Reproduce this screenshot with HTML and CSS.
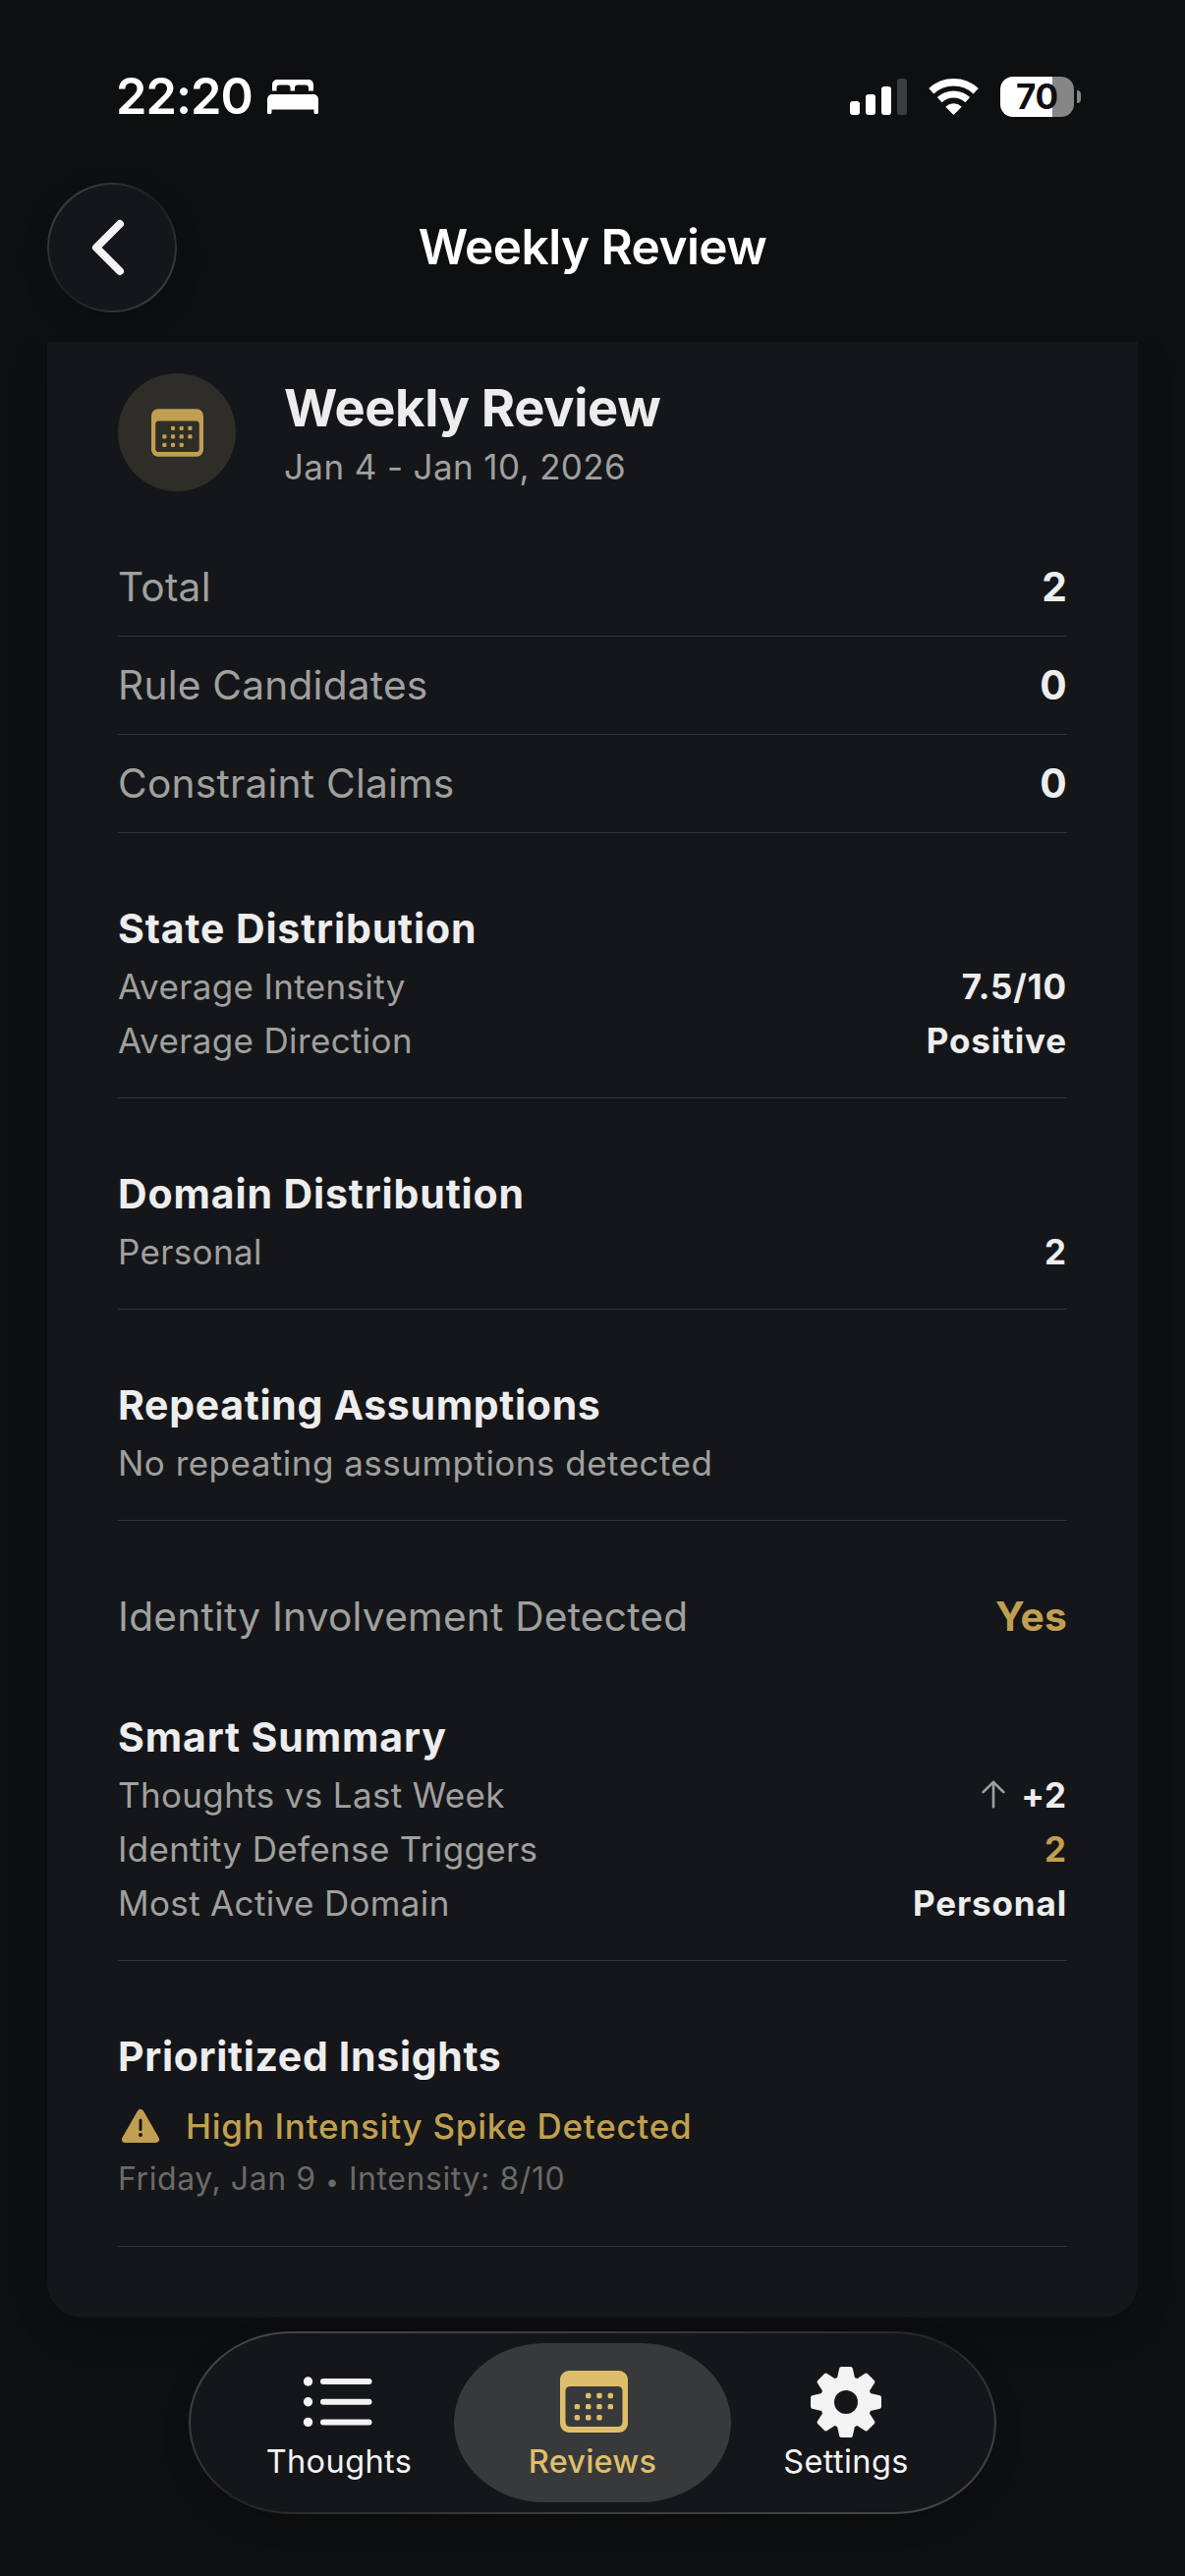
FILE: index.html
```
<!DOCTYPE html>
<html lang="en">
<head>
    <meta charset="UTF-8">
    <meta name="viewport" content="width=device-width, initial-scale=1.0">
    <title>Weekly Review</title>
    <link rel="stylesheet" href="styles.css">
</head>
<body>
<!-- shared calendar icon -->
<svg class="icon-defs" width="0" height="0">
    <symbol id="icon-calendar" viewBox="0 0 69 63">
        <path fill="currentColor" fill-rule="evenodd" d="M9 0H60A9 9 0 0 1 69 9V54A9 9 0 0 1 60 63H9A9 9 0 0 1 0 54V9A9 9 0 0 1 9 0ZM10 16A4.5 4.5 0 0 0 5.5 20.5V52.5A4.5 4.5 0 0 0 10 57H59A4.5 4.5 0 0 0 63.5 52.5V20.5A4.5 4.5 0 0 0 59 16Z"/>
        <g fill="currentColor">
            <rect x="26" y="22.8" width="5.4" height="5.4" rx="1.6"/>
            <rect x="37.3" y="22.8" width="5.4" height="5.4" rx="1.6"/>
            <rect x="48.6" y="22.8" width="5.4" height="5.4" rx="1.6"/>
            <rect x="14.7" y="33.9" width="5.4" height="5.4" rx="1.6"/>
            <rect x="26" y="33.9" width="5.4" height="5.4" rx="1.6"/>
            <rect x="37.3" y="33.9" width="5.4" height="5.4" rx="1.6"/>
            <rect x="48.6" y="33.9" width="5.4" height="5.4" rx="1.6"/>
            <rect x="14.7" y="45" width="5.4" height="5.4" rx="1.6"/>
            <rect x="26" y="45" width="5.4" height="5.4" rx="1.6"/>
            <rect x="37.3" y="45" width="5.4" height="5.4" rx="1.6"/>
        </g>
    </symbol>
</svg>

<!-- status bar -->
<div class="status-bar">
    <div class="status-left">
        <span class="time">22:20</span>
        <svg class="bed" viewBox="0 0 52 35" width="52" height="35" fill="#fff">
            <path d="M5 11.5V5a5 5 0 0 1 5-5h32a5 5 0 0 1 5 5v6.5h-5v-3a3 3 0 0 0-3-3h-8a3 3 0 0 0-3 3v3h-4.500v-3a3 3 0 0 0-3-3h-8a3 3 0 0 0-3 3v3z"/>
            <path d="M0 20a5 5 0 0 1 5-5h42a5 5 0 0 1 5 5v13.5a1.5 1.5 0 0 1-1.5 1.5h-1.5a1.5 1.5 0 0 1-1.5-1.5V30.5H4.500v3A1.5 1.5 0 0 1 3 35H1.5A1.5 1.5 0 0 1 0 33.5z"/>
        </svg>
    </div>
    <div class="status-right">
        <svg class="signal" viewBox="0 0 58 37" width="58" height="37" fill="#fff">
            <rect x="0" y="23" width="10" height="14" rx="3"/>
            <rect x="16" y="16" width="10" height="21" rx="3"/>
            <rect x="32" y="8" width="10" height="29" rx="3"/>
            <rect x="48" y="0" width="10" height="37" rx="3" fill="#3b3c3d"/>
        </svg>
        <svg class="wifi" viewBox="0 0 51 37" width="51" height="37" fill="none" stroke="#fff">
            <path d="M2.8 12.7A33.2 33.2 0 0 1 48.2 12.7" stroke-width="7.5"/>
            <path d="M11.2 21.6A21 21 0 0 1 39.8 21.6" stroke-width="7"/>
            <path d="M25.5 36L18.3 28.8A10.5 10.5 0 0 1 32.7 28.8Z" fill="#fff" stroke-width="1.5" stroke-linejoin="round"/>
        </svg>
        <div class="battery">
            <div class="battery-body">70</div>
            <div class="battery-cap"></div>
        </div>
    </div>
</div>

<!-- navigation -->
<div class="nav">
    <div class="back">
        <svg viewBox="0 0 34 58" width="34" height="58" fill="none" stroke="#f3f3f3" stroke-width="8" stroke-linecap="round" stroke-linejoin="round">
            <path d="M29 5L5 29L29 53"/>
        </svg>
    </div>
    <div class="nav-title">Weekly Review</div>
</div>

<div class="scroll">
    <div class="card">
        <div class="card-header">
            <div class="badge"><svg width="53" height="49"><use href="#icon-calendar"/></svg></div>
            <div class="card-heading">
                <h1>Weekly Review</h1>
                <p class="dates">Jan 4 - Jan 10, 2026</p>
            </div>
        </div>

        <div class="stat"><span>Total</span><b>2</b></div>
        <div class="stat"><span>Rule Candidates</span><b>0</b></div>
        <div class="stat"><span>Constraint Claims</span><b>0</b></div>

        <div class="section">
            <h2>State Distribution</h2>
            <div class="row"><span>Average Intensity</span><b>7.5/10</b></div>
            <div class="row"><span>Average Direction</span><b>Positive</b></div>
        </div>

        <div class="section">
            <h2>Domain Distribution</h2>
            <div class="row"><span>Personal</span><b>2</b></div>
        </div>

        <div class="section">
            <h2 class="tight">Repeating Assumptions</h2>
            <div class="row"><span class="note">No repeating assumptions detected</span></div>
        </div>

        <div class="identity"><span>Identity Involvement Detected</span><b class="gold">Yes</b></div>

        <div class="section">
            <h2>Smart Summary</h2>
            <div class="row">
                <span>Thoughts vs Last Week</span>
                <div class="trend">
                    <svg viewBox="0 0 24 29" width="24" height="29" fill="none" stroke="#a0a09e" stroke-width="2.6" stroke-linecap="round" stroke-linejoin="round">
                        <path d="M12 27.3V1.8M1.6 12.2L12 1.8L22.4 12.2"/>
                    </svg>
                    <b>+2</b>
                </div>
            </div>
            <div class="row"><span>Identity Defense Triggers</span><b class="gold">2</b></div>
            <div class="row"><span>Most Active Domain</span><b>Personal</b></div>
        </div>

        <div class="section insights">
            <h2 class="tight">Prioritized Insights</h2>
            <div class="insight">
                <svg viewBox="0 0 38 34" width="38" height="34">
                    <path d="M19 3.5L34.5 30.5H3.5Z" fill="#c0a050" stroke="#c0a050" stroke-width="7" stroke-linejoin="round"/>
                    <path d="M19 11V20.5" stroke="#15161a" stroke-width="3" stroke-linecap="round"/>
                    <circle cx="19" cy="26" r="2" fill="#15161a"/>
                </svg>
                <span>High Intensity Spike Detected</span>
            </div>
            <p class="meta">Friday, Jan 9 <span class="dot">•</span> Intensity: 8/10</p>
        </div>
    </div>
</div>

<!-- tab bar -->
<div class="tab-bar">
    <div class="tab">
        <svg viewBox="0 0 72 72" width="72" height="72" fill="#f3f3f3">
            <circle cx="4.5" cy="15" r="4.7"/>
            <circle cx="4.5" cy="35.7" r="4.7"/>
            <circle cx="4.5" cy="56.4" r="4.7"/>
            <rect x="17" y="12" width="52.5" height="6" rx="3"/>
            <rect x="17" y="32.7" width="52.5" height="6" rx="3"/>
            <rect x="17" y="53.4" width="52.5" height="6" rx="3"/>
        </svg>
        <span>Thoughts</span>
    </div>
    <div class="tab active">
        <svg viewBox="0 0 72 72" width="72" height="72"><use href="#icon-calendar" x="3" y="4" width="69" height="63"/></svg>
        <span>Reviews</span>
    </div>
    <div class="tab">
        <svg viewBox="-36 -36 72 72" width="72" height="72" fill="#f3f3f3" stroke="#f3f3f3" stroke-width="4" stroke-linejoin="round">
            <circle r="24.5"/>
            <path id="tooth" d="M-7.5 -22L-4.8 -34H4.8L7.5 -22Z"/>
            <use href="#tooth" transform="rotate(45)"/>
            <use href="#tooth" transform="rotate(90)"/>
            <use href="#tooth" transform="rotate(135)"/>
            <use href="#tooth" transform="rotate(180)"/>
            <use href="#tooth" transform="rotate(225)"/>
            <use href="#tooth" transform="rotate(270)"/>
            <use href="#tooth" transform="rotate(315)"/>
            <circle r="12" fill="#15161a" stroke="none"/>
        </svg>
        <span>Settings</span>
    </div>
</div>
</body>
</html>
```
FILE: styles.css
```
* {
    margin: 0;
    padding: 0;
    box-sizing: border-box;
}

body {
    font-family: Inter, "Liberation Sans", sans-serif;
    background-color: #0e0f11;
    color: #ededed;
    width: 1206px;
    height: 2622px;
    overflow: hidden;
}

svg {
    display: block;
    flex: none;
    overflow: visible;
}

.icon-defs {
    display: none;
}

/* status bar */
.status-bar {
    height: 186px;
    padding: 72px 106px 62px 118px;
    display: flex;
    justify-content: space-between;
    align-items: center;
    color: #fff;
}

.status-left,
.status-right {
    display: flex;
    align-items: center;
}

.time {
    font-size: 50.5px;
    line-height: 52px;
    font-weight: 600;
    letter-spacing: -1px;
}

.bed {
    margin-left: 15px;
}

.wifi {
    margin-left: 22px;
}

.battery {
    display: flex;
    align-items: center;
    margin-left: 22px;
}

.battery-body {
    width: 75px;
    height: 41px;
    border-radius: 13px;
    background: linear-gradient(to right, #fff 53px, #868686 53px);
    color: #0e0f11;
    font-size: 35px;
    line-height: 41px;
    font-weight: 700;
    letter-spacing: -0.3px;
    text-align: center;
}

.battery-cap {
    width: 4px;
    height: 13px;
    margin-left: 3px;
    border-radius: 0 4px 4px 0;
    background-color: #868686;
}

/* navigation */
.nav {
    height: 162px;
    padding: 0 48px;
    display: grid;
    grid-template-columns: 132px 1fr 132px;
    align-items: start;
}

.back {
    width: 132px;
    height: 132px;
    padding-left: 43px;
    display: flex;
    align-items: center;
    border: 2px solid transparent;
    border-radius: 50%;
    background:
        linear-gradient(#15161a, #15161a) padding-box,
        linear-gradient(135deg, #484848, #1c1c1c 50%, #484848) border-box;
    box-shadow: 0 10px 30px rgba(0, 0, 0, 0.12);
}

.nav-title {
    font-size: 49.5px;
    line-height: 130px;
    font-weight: 600;
    letter-spacing: -0.55px;
    text-align: center;
    color: #fff;
}

/* card, its top is cut off by the navigation */
.scroll {
    padding: 0 48px;
    clip-path: inset(0 0 -80px 0);
}

.card {
    height: 2011px;
    padding: 32px 72px 0;
    background-color: #15161a;
    border-radius: 0 0 36px 36px;
    box-shadow: 0 12px 36px rgba(0, 0, 0, 0.15);
}

.card-header {
    display: flex;
    height: 120px;
    margin-bottom: 48px;
}

.badge {
    width: 120px;
    height: 120px;
    border-radius: 50%;
    background-color: #2f2d27;
    color: #c0a050;
    display: flex;
    justify-content: center;
    align-items: center;
}

.card-heading {
    margin-left: 49px;
    padding-top: 5px;
}

h1 {
    font-size: 52.4px;
    line-height: 60px;
    font-weight: 700;
    letter-spacing: -0.35px;
}

.dates {
    font-size: 35px;
    line-height: 61px;
    letter-spacing: 0.38px;
    color: #a0a09e;
}

.stat,
.identity {
    display: flex;
    justify-content: space-between;
    align-items: center;
    font-size: 40.7px;
    letter-spacing: 0.2px;
    color: #a0a09e;
}

.stat {
    height: 100px;
    border-bottom: 1px solid #34353a;
}

.identity {
    height: 123px;
    padding-top: 71px;
}

b {
    font-weight: 700;
    color: #ededed;
}

/* sections */
.section {
    padding: 66px 0 31px;
    border-bottom: 1px solid #34353a;
}

h2 {
    font-size: 41px;
    line-height: 62px;
    font-weight: 700;
    letter-spacing: 0.88px;
}

h2.tight {
    letter-spacing: 0.68px;
}

.row {
    height: 55px;
    display: flex;
    justify-content: space-between;
    align-items: center;
    font-size: 35px;
    letter-spacing: 0.35px;
    color: #a0a09e;
}

.row .note {
    letter-spacing: 0.48px;
}

.row b {
    letter-spacing: 0.85px;
}

b.gold {
    color: #c0a050;
}

.trend {
    display: flex;
    align-items: center;
    gap: 16px;
}

.insights {
    padding-bottom: 41px;
}

.insight {
    height: 66px;
    padding: 14px 0 0 4px;
    display: flex;
    align-items: center;
    gap: 27px;
    font-size: 35px;
    font-weight: 500;
    letter-spacing: 0.73px;
    color: #c0a050;
}

.meta {
    font-size: 32px;
    line-height: 55px;
    letter-spacing: 0.58px;
    color: #6b6a66;
}

.dot {
    font-size: 24px;
    line-height: 1;
}

/* tab bar */
.tab-bar {
    position: relative;
    width: 822px;
    height: 186px;
    margin: 14px auto 0 192px;
    padding: 10px;
    display: flex;
    border: 2px solid transparent;
    border-radius: 104px / 93px;
    background:
        linear-gradient(#15161a, #15161a) padding-box,
        linear-gradient(to bottom right, #484848, #3a3936 30%, #242422 50%, #3a3936 70%, #484848) border-box;
    box-shadow: 0 10px 30px rgba(0, 0, 0, 0.12);
}

.tab {
    width: 282px;
    height: 162px;
    padding-top: 24px;
    flex: none;
    display: flex;
    flex-direction: column;
    align-items: center;
    border-radius: 92px / 81px;
    font-size: 32.5px;
    line-height: 50px;
    font-weight: 400;
    letter-spacing: 0.4px;
    color: #f3f3f3;
}

.tab + .tab {
    margin-left: -24px;
}

.tab.active {
    background-color: #38393a;
    color: #dfbe6b;
    font-weight: 500;
    letter-spacing: 0.2px;
}
```
